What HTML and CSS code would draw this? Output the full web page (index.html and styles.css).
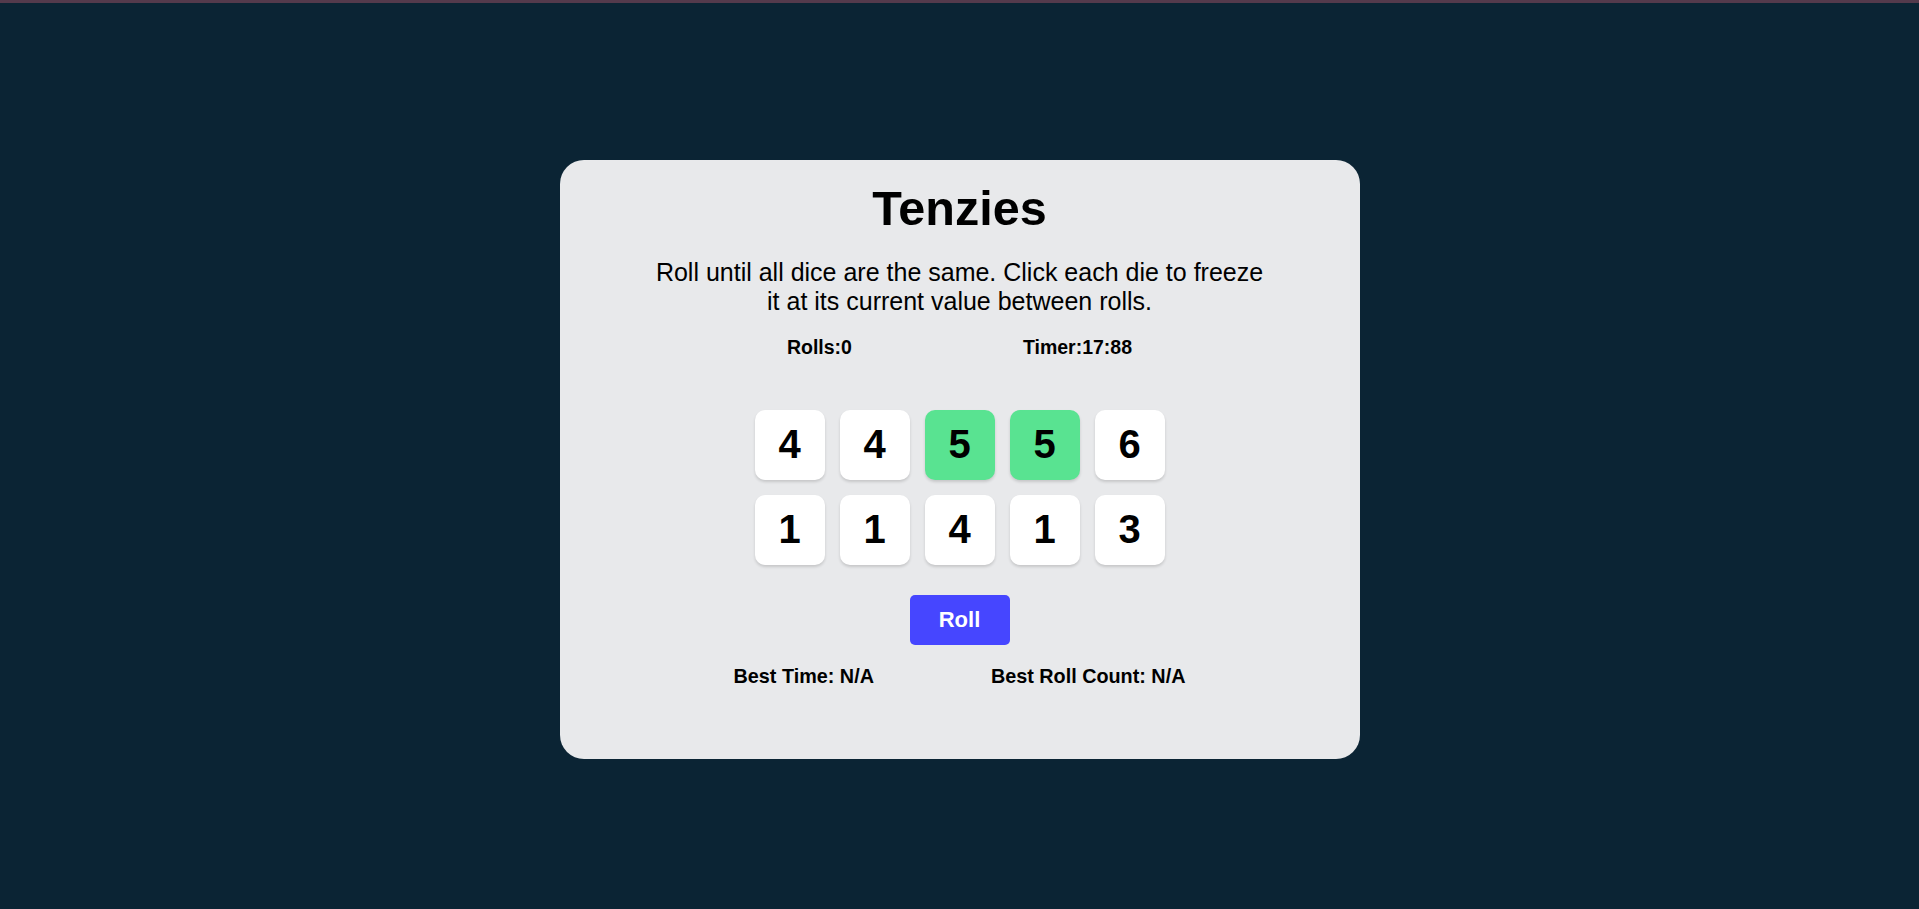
FILE: index.html
```html
<!DOCTYPE html>
<html lang="en">
<head>
<meta charset="utf-8">
<title>Tenzies</title>
<link rel="stylesheet" href="styles.css">
</head>
<body>
<div class="topbar"></div>
<main class="page">
  <section class="card">
    <h1 class="title">Tenzies</h1>
    <p class="instructions">Roll until all dice are the same. Click each die to freeze it at its current value between rolls.</p>
    <div class="stats">
      <span class="stat">Rolls:0</span>
      <span class="stat">Timer:17:88</span>
    </div>
    <div class="dice">
      <button class="die">4</button>
      <button class="die">4</button>
      <button class="die held">5</button>
      <button class="die held">5</button>
      <button class="die">6</button>
      <button class="die">1</button>
      <button class="die">1</button>
      <button class="die">4</button>
      <button class="die">1</button>
      <button class="die">3</button>
    </div>
    <button class="roll">Roll</button>
    <div class="bests">
      <span class="stat best">Best Time: N/A</span>
      <span class="stat best">Best Roll Count: N/A</span>
    </div>
  </section>
</main>
</body>
</html>
```

FILE: styles.css
```css
* { box-sizing: border-box; }
html, body {
  margin: 0;
  padding: 0;
}
body {
  background: #0b2434;
  font-family: "Liberation Sans", Arial, sans-serif;
  color: #000;
  height: 909px;
  overflow: hidden;
}
.topbar {
  height: 3px;
  background: #543a4c;
}
.page {
  display: flex;
  justify-content: center;
  padding-top: 157px;
}
.card {
  width: 800px;
  height: 599px;
  background: #e8e9eb;
  border-radius: 24px;
  padding-top: 21px;
  display: flex;
  flex-direction: column;
  align-items: center;
}
.title {
  margin: 0;
  font-size: 48.5px;
  font-weight: 700;
  line-height: 55px;
}
.instructions {
  margin: 22px 0 0;
  width: 620px;
  text-align: center;
  font-size: 25px;
  line-height: 28.6px;
}
.stats {
  margin-top: 21px;
  display: flex;
  gap: 171px;
}
.stat {
  font-size: 19.5px;
  font-weight: 700;
  line-height: 22.4px;
}
.stat.best {
  font-size: 19.8px;
}
.dice {
  margin-top: 51px;
  display: grid;
  grid-template-columns: repeat(5, 70px);
  grid-auto-rows: 70px;
  gap: 15px;
}
.die {
  border: none;
  padding: 0;
  background: #fff;
  border-radius: 10px;
  box-shadow: 0 2px 3px rgba(0, 0, 0, 0.15);
  font-family: "Liberation Sans", Arial, sans-serif;
  font-size: 40px;
  font-weight: 700;
  color: #000;
  display: flex;
  align-items: center;
  justify-content: center;
}
.die.held {
  background: #59e391;
}
.roll {
  margin-top: 30px;
  width: 100px;
  height: 50px;
  border: none;
  border-radius: 5px;
  background: #4646ff;
  color: #fff;
  font-family: "Liberation Sans", Arial, sans-serif;
  font-size: 22px;
  font-weight: 700;
  padding: 0;
}
.bests {
  margin-top: 20px;
  display: flex;
  gap: 117px;
}
```
